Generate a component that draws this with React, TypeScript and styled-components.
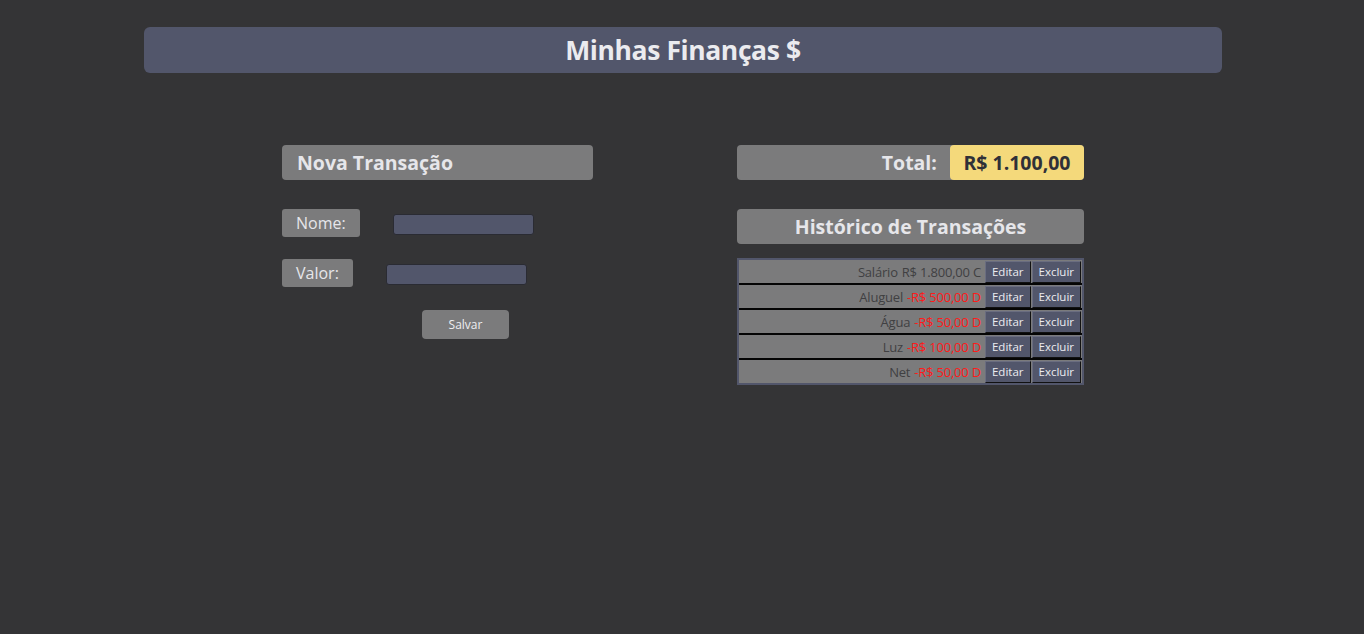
import React from 'react';
import styled, { createGlobalStyle } from 'styled-components';

const GlobalStyle = createGlobalStyle`
  body {
    margin: 0;
    background: #343436;
    font-family: 'Open Sans', 'Noto Sans', sans-serif;
    color: #e6e6ea;
  }
`;

const Page = styled.div`
  padding: 27px 0 0 2px;
`;

const Header = styled.header`
  width: 1078px;
  height: 46px;
  margin: 0 auto;
  background: #52566b;
  border-radius: 6px;
  display: flex;
  align-items: center;
  justify-content: center;
`;

const Title = styled.h1`
  margin: 0;
  font-size: 26.5px;
  font-weight: 700;
  letter-spacing: -0.4px;
  color: #ebebef;
`;

const Main = styled.main`
  width: 802px;
  margin: 72px auto 0;
  display: flex;
  justify-content: space-between;
  align-items: flex-start;
`;

const Column = styled.section<{ width: number }>`
  width: ${props => props.width}px;
  display: flex;
  flex-direction: column;
`;

const Bar = styled.div<{ align?: string }>`
  height: 35px;
  background: #7b7b7c;
  border-radius: 4px;
  display: flex;
  align-items: center;
  justify-content: ${props => props.align || 'flex-start'};
  font-size: 19.5px;
  font-weight: 700;
  color: #e6e6ea;
`;

const BarTitle = styled.h2`
  margin: 0 0 0 15px;
  font-size: 19.5px;
  font-weight: 700;
`;

const FormRow = styled.div<{ top: number }>`
  display: flex;
  align-items: center;
  margin-top: ${props => props.top}px;
`;

const Label = styled.label`
  height: 28px;
  padding: 0 14px;
  background: #7b7b7c;
  border-radius: 3px;
  display: flex;
  align-items: center;
  font-size: 16px;
  color: #e6e6ea;
`;

const Input = styled.input`
  width: 141px;
  height: 21px;
  margin: 3px 0 0 33px;
  box-sizing: border-box;
  background: #52566b;
  border: 1px solid #2a2b33;
  border-radius: 3px;
  color: #e6e6ea;
`;

const SaveButton = styled.button`
  width: 87px;
  height: 29px;
  margin: 23px 0 0 140px;
  background: #7b7b7c;
  border: none;
  border-radius: 4px;
  font-family: inherit;
  font-size: 12px;
  color: #ededf0;
`;

const TotalLabel = styled.span`
  margin-right: 13px;
`;

const TotalValue = styled.span`
  height: 35px;
  padding: 0 13.5px;
  background: #f4d97b;
  border-radius: 4px;
  display: flex;
  align-items: center;
  color: #2f3038;
`;

const HistoryBar = styled(Bar)`
  margin-top: 29px;
`;

const List = styled.ul`
  margin: 14px 0 0;
  padding: 0;
  list-style: none;
  border: 2px solid #52566b;
  background: #7b7b7c;
`;

const Row = styled.li`
  height: 23px;
  display: flex;
  align-items: center;
  justify-content: flex-end;
  padding-right: 1px;
  font-size: 13px;
  color: #404042;
  letter-spacing: -0.2px;
  border-bottom: 2px solid #050505;

  &:last-child {
    border-bottom: none;
  }
`;

const Amount = styled.span<{ debit: boolean }>`
  margin-left: 4px;
  margin-right: 3px;
  color: ${props => (props.debit ? '#ff1a1a' : '#404042')};
`;

const RowButton = styled.button`
  height: 22px;
  padding: 0 6px;
  margin-left: 1px;
  background: #52566b;
  border: 1px solid;
  border-color: #6a6d80 #111 #111 #6a6d80;
  font-family: inherit;
  font-size: 11.5px;
  color: #ececf0;
`;

const transactions = [
  { name: 'Salário', value: 'R$ 1.800,00 C', debit: false },
  { name: 'Aluguel', value: '-R$ 500,00 D', debit: true },
  { name: 'Água', value: '-R$ 50,00 D', debit: true },
  { name: 'Luz', value: '-R$ 100,00 D', debit: true },
  { name: 'Net', value: '-R$ 50,00 D', debit: true },
];

export default function App() {
  return (
    <Page>
      <GlobalStyle />
      <Header>
        <Title>Minhas Finanças $</Title>
      </Header>
      <Main>
        <Column width={311}>
          <Bar>
            <BarTitle>Nova Transação</BarTitle>
          </Bar>
          <FormRow top={29}>
            <Label>Nome:</Label>
            <Input type="text" />
          </FormRow>
          <FormRow top={22}>
            <Label>Valor:</Label>
            <Input type="text" />
          </FormRow>
          <div>
            <SaveButton>Salvar</SaveButton>
          </div>
        </Column>
        <Column width={347}>
          <Bar align="flex-end">
            <TotalLabel>Total:</TotalLabel>
            <TotalValue>R$ 1.100,00</TotalValue>
          </Bar>
          <HistoryBar align="center">Histórico de Transações</HistoryBar>
          <List>
            {transactions.map(t => (
              <Row key={t.name}>
                {t.name}
                <Amount debit={t.debit}>{t.value}</Amount>
                <RowButton>Editar</RowButton>
                <RowButton>Excluir</RowButton>
              </Row>
            ))}
          </List>
        </Column>
      </Main>
    </Page>
  );
}
